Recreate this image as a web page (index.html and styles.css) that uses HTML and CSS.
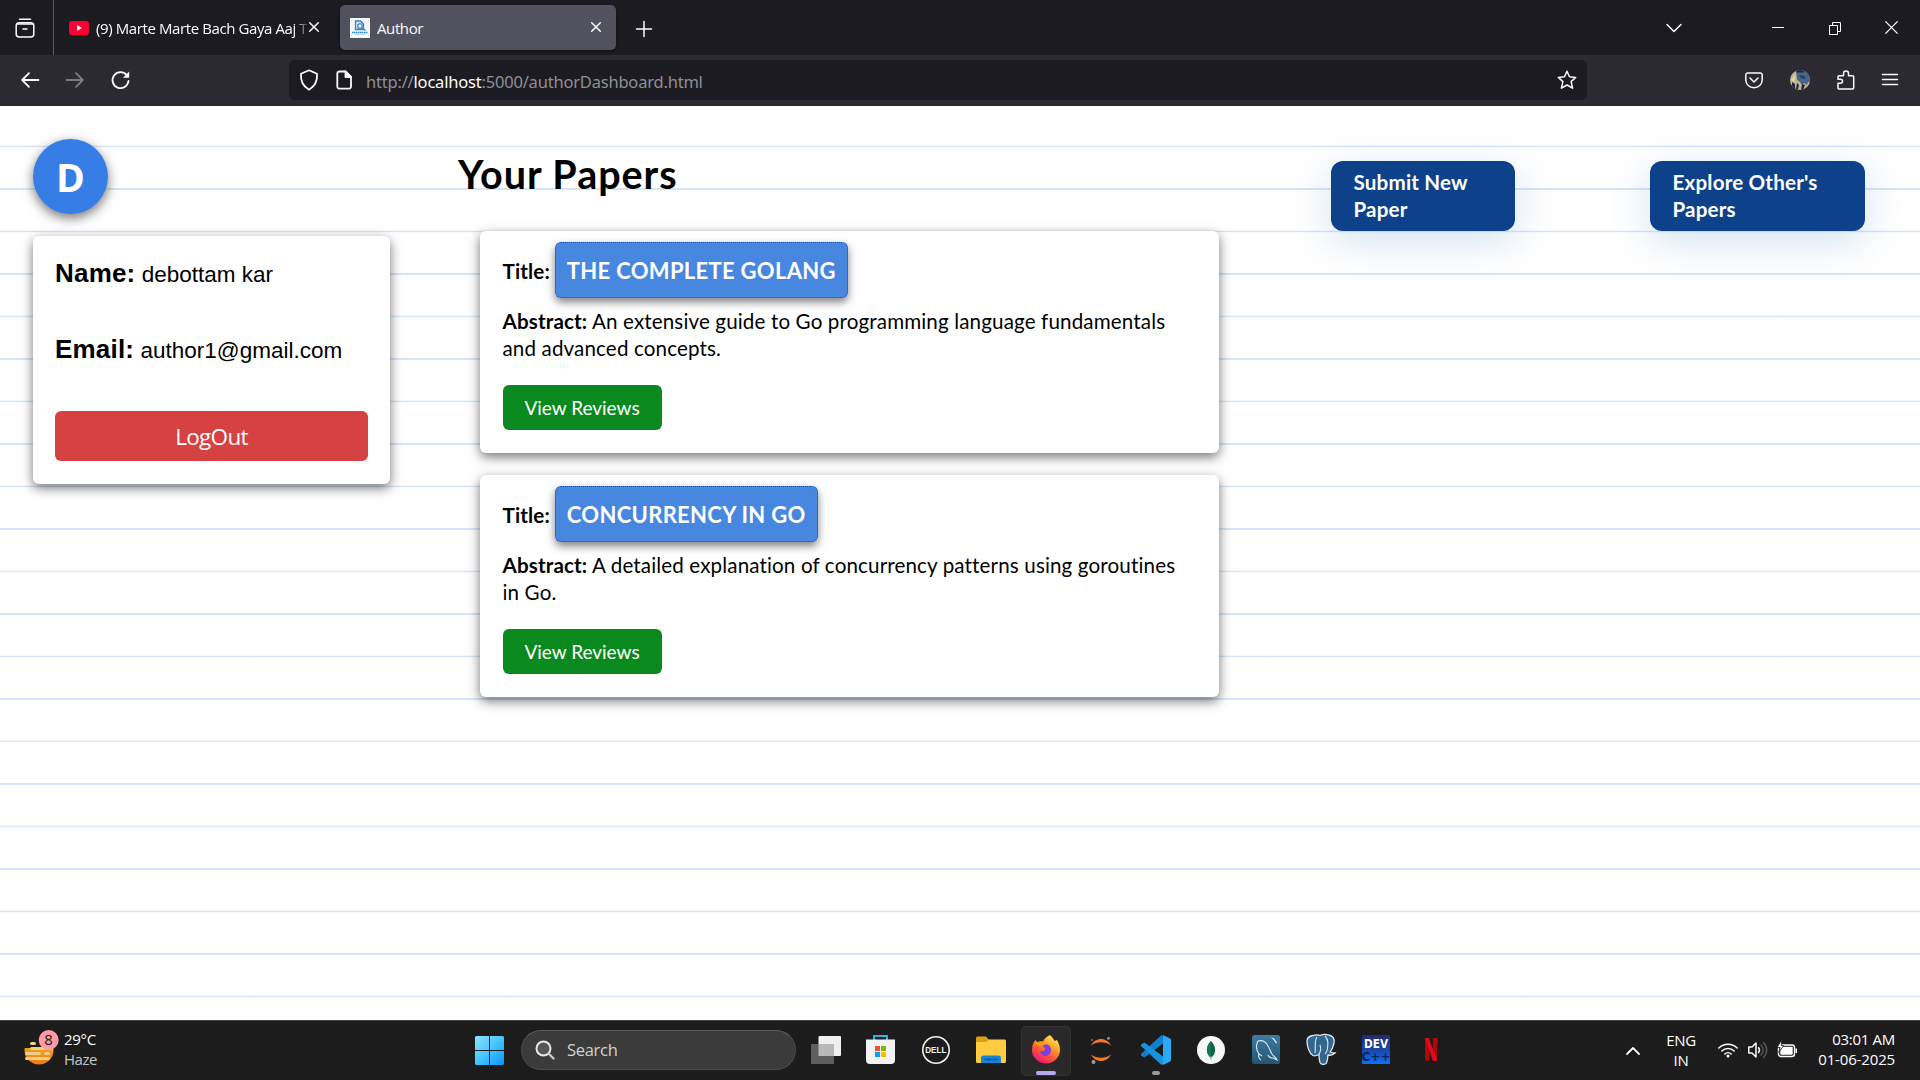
FILE: index.html
```html
<!DOCTYPE html>
<html lang="en">
<head>
<meta charset="utf-8">
<title>Author</title>
<link rel="stylesheet" href="styles.css">
</head>
<body>
<header class="tabstrip">
  <div class="recent"><svg width="20" height="20" viewBox="0 0 20 20" class="line"><path d="M4.5 1.2h11"/><rect x="1.2" y="4.8" width="17.6" height="14.200" rx="3"/><path d="M1.800 6h16.400M8 11h4"/></svg></div>
  <div class="tab">
    <svg width="20" height="14" viewBox="0 0 20 14"><rect width="20" height="14" rx="3" fill="#ff0033"/><path d="M8 4v6l5-3z" fill="#fff"/></svg>
    <span class="tab-label fade">(9) Marte Marte Bach Gaya Aaj T</span>
    <svg class="line x" width="10" height="10" viewBox="0 0 10 10"><path d="M.7.7l8.6 8.6M9.3.7L.7 9.3"/></svg>
  </div>
  <div class="tab active">
    <svg width="20" height="20" viewBox="0 0 20 20"><rect width="20" height="20" fill="#f4f6f7"/><path d="M5.500 11.500V3h5l3 3v5.500z" fill="#d4e8f8" stroke="#2f86c8" stroke-width="1.300"/><circle cx="10" cy="8" r="2.300" fill="#fff" stroke="#2a74b8" stroke-width="1.100"/><path d="M12 10l3.500 2.500" stroke="#2f86c8" stroke-width="1.500"/><path d="M2 14.500h16" stroke="#2f86c8" stroke-width="1.600" stroke-dasharray="1.500 .5"/><path d="M5 16.500h10" stroke="#b5c9dc" stroke-width=".8"/></svg>
    <span class="tab-label">Author</span>
    <svg class="line x" width="10" height="10" viewBox="0 0 10 10"><path d="M.7.7l8.6 8.6M9.3.7L.7 9.3"/></svg>
  </div>
  <svg class="line newtab" width="16" height="16" viewBox="0 0 16 16"><path d="M8 .5v15M.5 8h15"/></svg>
  <div class="winctl">
    <svg class="line" width="16" height="10" viewBox="0 0 16 10"><path d="M1 1.500l7 7 7-7"/></svg>
    <svg class="thin" width="12" height="14" viewBox="0 0 12 14"><path d="M0 6.500h12"/></svg>
    <svg class="thin" width="13" height="14" viewBox="0 0 13 14"><path d="M.5 4.500h8v9h-8zM3.500 4V1.500h8v9H9"/></svg>
    <svg class="thin wide" width="13" height="13" viewBox="0 0 13 13"><path d="M.4.4l12.200 12.200M12.600.4L.4 12.600"/></svg>
  </div>
</header>
<nav class="toolbar">
  <svg class="line heavy" width="18" height="16" viewBox="0 0 18 16"><path d="M17.500 8H1.200M8 1.200L1.200 8 8 14.800"/></svg>
  <svg class="line heavy dim" width="18" height="16" viewBox="0 0 18 16"><path d="M.5 8h16.300M10 1.200L16.800 8 10 14.800"/></svg>
  <svg class="line heavy" width="20" height="20" viewBox="0 0 20 20"><path d="M17.500 11A8 8 0 1 1 16 5.400"/><path d="M18.200 1.500v6.200H12z" fill="#fbfbfe" stroke="none"/></svg>
  <div class="urlbar">
    <svg class="line heavy" width="20" height="22" viewBox="0 0 20 22"><path d="M10 1.300l8 3.500c.5 6.700-2 12.500-8 15.900C4 17.300 1.500 11.500 2 4.800z"/></svg>
    <svg class="line heavy" width="16" height="20" viewBox="0 0 16 20"><path d="M3.500 1.500h6L15 7v9.500a2.200 2.200 0 0 1-2.200 2.200H3.500a2.200 2.200 0 0 1-2.200-2.200v-13a2.200 2.200 0 0 1 2.200-2z"/><path d="M9.500 1.500V7H15z" fill="#fbfbfe"/></svg>
    <span class="url">http://<b>localhost</b>:5000/authorDashboard.html</span>
    <svg class="line star" width="20" height="20" viewBox="0 0 20 20"><path d="M10 1.300l2.500 5.500 6.200.6-4.600 4.200 1.500 6.600-5.600-3.200-5.600 3.200 1.500-6.600L1.300 7.400l6.200-.6z"/></svg>
  </div>
  <div class="actions">
    <svg class="line" width="18" height="17" viewBox="0 0 18 17"><path d="M2.800 1h12.400a2 2 0 0 1 2 2v5a8.200 7.800 0 0 1-16.400 0V3a2 2 0 0 1 2-2z"/><path d="M5 6l4 4 4-4"/></svg>
    <svg width="20" height="20" viewBox="0 0 20 20"><clipPath id="round"><circle cx="10" cy="10" r="10"/></clipPath><g clip-path="url(#round)"><rect width="20" height="20" fill="#c5b48c"/><path d="M6 1h14v12l-2-1-1 3-3-2-2 2-3-4-2-1z" fill="#46658d"/><path d="M5 0h9v2.500H7zM2 12l3 2 0 5H2zM12 14l3 1-2 5h-2zM7 13l2 2-1 4H6z" fill="#172a41"/><path d="M9 5l5 1 2 3-5-1z" fill="#233d5c"/><path d="M1 10l5-6-2 8z" fill="#e3d7b0"/></g></svg>
    <svg class="line" width="18" height="20" viewBox="0 0 18 20"><path d="M1 13.200V18a1 1 0 0 0 1 1h13.500a1.200 1.200 0 0 0 1.200-1.200V7a1.200 1.200 0 0 0-1.200-1.200H11.500V3.500a2.500 2.500 0 0 0-5 0v2.300H2.200A1.200 1.200 0 0 0 1 7v2.200h2.500a2 2 0 0 1 0 4H1"/></svg>
    <svg class="line" width="16" height="14" viewBox="0 0 16 14"><path d="M.5 1.500h15M.5 6.500h15M.5 11.500h15"/></svg>
  </div>
</nav>

<main class="page">
  <aside class="profile">
    <div class="avatar">D</div>
    <div class="card info">
      <p><b>Name:</b> debottam kar</p>
      <p><b>Email:</b> author1@gmail.com</p>
      <button class="logout">LogOut</button>
    </div>
  </aside>
  <section class="papers">
    <h1>Your Papers</h1>
    <article class="card paper">
      <div class="title-row"><b>Title:</b><span class="badge">THE COMPLETE GOLANG</span></div>
      <p><b>Abstract:</b> An extensive guide to Go programming language fundamentals and advanced concepts.</p>
      <button class="reviews">View Reviews</button>
    </article>
    <article class="card paper">
      <div class="title-row"><b>Title:</b><span class="badge">CONCURRENCY IN GO</span></div>
      <p><b>Abstract:</b> A detailed explanation of concurrency patterns using goroutines in Go.</p>
      <button class="reviews">View Reviews</button>
    </article>
  </section>
  <div class="links">
    <a class="submit">Submit New Paper</a>
    <a class="explore">Explore Other's Papers</a>
  </div>
</main>

<footer class="taskbar">
  <div class="weather">
    <svg width="36" height="38" viewBox="0 0 36 38"><defs><linearGradient id="sun" x1="0" y1="0" x2="0" y2="1"><stop offset="0" stop-color="#f9bb1c"/><stop offset="1" stop-color="#ee7a1d"/></linearGradient></defs><circle cx="15" cy="20" r="14.500" fill="url(#sun)"/><path d="M0 0h36v18H0z" fill="#1c1c1c"/><path d="M7.500 13.500h3M7.500 18.500h20M2.500 23.500h13M21.500 23.500h3M2.500 28.500h22" stroke="#efcf80" stroke-width="3" stroke-linecap="round"/><circle cx="24.700" cy="10" r="10" fill="#ff99a4"/><text x="24.500" y="15" text-anchor="middle" class="count">8</text></svg>
    <div><div>29°C</div><div class="haze">Haze</div></div>
  </div>
  <div class="apps">
    <svg class="start" width="29" height="29" viewBox="0 0 29 29"><defs><linearGradient id="win" x1="0" y1="0" x2="1" y2="1"><stop offset="0" stop-color="#8be3ff"/><stop offset=".5" stop-color="#45c5ff"/><stop offset="1" stop-color="#0a94fb"/></linearGradient></defs><path d="M1 0h13v14H0V1zM15 0h13l1 1v13H15zM0 15h14v14H1l-1-1zM15 15h14v13l-1 1H15z" fill="url(#win)"/></svg>
    <div class="search"><svg width="20" height="20" viewBox="0 0 20 20"><circle cx="8.500" cy="8.500" r="7" fill="#555" stroke="#e8e8e8" stroke-width="2"/><path d="M13.500 13.500l5 5" stroke="#c9c9c9" stroke-width="2.400" stroke-linecap="round"/></svg>Search</div>
    <div class="app"><svg width="30" height="28" viewBox="0 0 30 28"><rect x="7.500" width="22.500" height="20" rx="1" fill="#f0f0f0"/><rect y="8" width="23" height="20" rx="1" fill="#5e5e5e"/><path d="M7.500 8H23v12H7.500z" fill="#b9b9b9"/></svg></div>
    <div class="app store"><svg width="29" height="29" viewBox="0 0 29 29"><path d="M8 6V1h13v5" fill="none" stroke="#25b3ee" stroke-width="2"/><path d="M0 4.500h29V25a4 4 0 0 1-4 4H4a4 4 0 0 1-4-4z" fill="#f3f3f3"/><path d="M9 11h5v5H9z" fill="#f25022"/><path d="M15 11h5v5h-5z" fill="#7fba00"/><path d="M9 17h5v5H9z" fill="#00a4ef"/><path d="M15 17h5v5h-5z" fill="#ffb900"/></svg></div>
    <div class="app"><svg width="30" height="30" viewBox="0 0 30 30"><circle cx="15" cy="15" r="13.200" fill="none" stroke="#f2f2f2" stroke-width="1.600"/><text x="14.800" y="18.200" text-anchor="middle" class="dell" textLength="21" lengthAdjust="spacingAndGlyphs">DELL</text></svg></div>
    <div class="app"><svg width="30" height="28" viewBox="0 0 30 28"><path d="M0 2a1.500 1.500 0 0 1 1.500-1.500H10L13 4v5H0z" fill="#dca00c"/><path d="M0 6h10l3-2.500h15.500A1.500 1.500 0 0 1 30 5v20.500A1.500 1.500 0 0 1 28.500 27h-27A1.500 1.500 0 0 1 0 25.500z" fill="#ffcc3f"/><path d="M5 27v-5a2.500 2.500 0 0 1 2.500-2.500h15A2.500 2.500 0 0 1 25 22v5z" fill="#1584d4"/><path d="M8.500 23.500h13" stroke="#0a4c8c" stroke-width="1.300"/></svg></div>
    <div class="app current"><svg width="28" height="29" viewBox="0 0 28 29"><defs><linearGradient id="fox" x1=".85" y1="0" x2=".25" y2="1"><stop offset="0" stop-color="#fff44f"/><stop offset=".4" stop-color="#ff9a2a"/><stop offset=".7" stop-color="#ff4a3f"/><stop offset="1" stop-color="#e3107c"/></linearGradient></defs><path d="M18 0c2 2 3 3 4.500 6l2.500-1c2 4 3 6 3 10a14 13.500 0 0 1-28 0C0 10 1.500 7 3.500 5L5 7.500c2-1.500 4-1.500 6-1 1-3 4-5 7-6.500z" fill="url(#fox)"/><path d="M10 11c4-3 9-1 9 4a5.500 5.500 0 0 1-11 1c2 1 4 0 5-1.500 1-1-1-2-3-3.500z" fill="#7b40dd"/><path d="M3.500 6c0 4 2 5 4 5.500l5-1.500c-1-2-3-3-5-2z" fill="#ff980e"/></svg></div>
    <div class="app"><svg width="22" height="28" viewBox="0 0 22 28"><path d="M1 9.500C5 .8 17 .8 21 9.500 15 5.200 7 5.200 1 9.500zM1 18.500c4 8.700 16 8.700 20 0-6 4.300-14 4.300-20 0z" fill="#f37726"/><circle cx="18.500" cy="2.300" r="1.500" fill="#8a8a8a"/><circle cx="3.500" cy="26" r="2" fill="#9a9a9a"/><circle cx="2" cy="4" r="1" fill="#777"/></svg></div>
    <div class="app open"><svg width="30" height="30" viewBox="0 0 30 30"><path d="M22 8.500L3.500 22.500 0 20.500v-1.500L20.500 0l1.500 1z" fill="#0f7fd0"/><path d="M22 21.500L3.500 7.500 0 9.500V11l20.500 19 1.500-1z" fill="#1593e0"/><path d="M22 0l7 3.500a2 2 0 0 1 1 1.500v20a2 2 0 0 1-1 1.500L22 30z" fill="#2ba9f4"/></svg></div>
    <div class="app"><svg width="28" height="28" viewBox="0 0 28 28"><circle cx="14" cy="14" r="14" fill="#f8f8f8"/><path d="M14 5c5 5 6 12 0 17-6-5-5-12 0-17z" fill="#116149"/><path d="M14 5c-5 5-6 12 0 17z" fill="#13794f"/><path d="M14 20v4" stroke="#9fb9ad"/></svg></div>
    <div class="app"><svg width="28" height="29" viewBox="0 0 28 29"><defs><linearGradient id="sql" x1="0" y1="0" x2="0" y2="1"><stop offset="0" stop-color="#3f7ba2"/><stop offset="1" stop-color="#245672"/></linearGradient></defs><rect width="28" height="29" rx="2.500" fill="url(#sql)"/><path d="M9 25c-2-1-3-4-2-6-3-4-3-9-1-13 4-1 8 1 10 5 2 3 2 5 4 8 1 2 4 3 5 6l-4-2c-2 0-4 0-5-3M7 19l3 2" fill="none" stroke="#d9e9f1" stroke-width="1.100"/><path d="M19 2l3 1.500 3 4-1 1-2-3z" fill="#e8f1f6"/></svg></div>
    <div class="app"><svg width="30" height="31" viewBox="0 0 30 31"><path d="M7 1.500c3-1 5-1 7 0 3-1.500 6-1.500 9-.5 4 1 6 4 5 8-1 4-2 7-4 9 2 1 4 1 5 1-2 2-5 2.500-7 2-.5 4-.5 7-2 8.500-2 1.500-5 1-6-1-1-3-1-6-1-8-2 1-4 2-6 1C3 19 1 12 1 7c0-3 3-5 6-5.500z" fill="#336791" stroke="#dfe8ee" stroke-width="1.300"/><path d="M11 3C8 7 10 12 9 19M19 2c4 4 3 9 2 15M13 20c2-3 2-6 1-9M21 17l-2 3" fill="none" stroke="#dfe8ee" stroke-width="1.100"/></svg></div>
    <div class="app"><svg width="30" height="29" viewBox="0 0 30 29"><defs><linearGradient id="dev" x1="0" y1="0" x2="0" y2="1"><stop offset="0" stop-color="#232a72"/><stop offset=".5" stop-color="#1c46a8"/><stop offset="1" stop-color="#0e6ef6"/></linearGradient></defs><rect x="1" width="28" height="29" fill="url(#dev)"/><text x="15" y="12.500" text-anchor="middle" class="dev" textLength="24" lengthAdjust="spacingAndGlyphs">DEV</text><text x="15" y="26" text-anchor="middle" class="cpp" textLength="29" lengthAdjust="spacingAndGlyphs">C++</text></svg></div>
    <div class="app"><svg width="12" height="23" viewBox="0 0 12 23"><path d="M0 0h4v23l-4-.5zM8 0h4v22.500L8 23z" fill="#b1060f"/><path d="M0 0h4l8 22.500-4 .5z" fill="#e50914"/></svg></div>
  </div>
  <div class="tray">
    <svg class="line heavy chev" width="14" height="8" viewBox="0 0 14 8"><path d="M1 7l6-6 6 6"/></svg>
    <div class="lang"><div>ENG</div><div>IN</div></div>
    <svg class="line wifi" width="20" height="16" viewBox="0 0 20 16"><path d="M.8 6a13 13 0 0 1 18.400 0M3.800 9a8.800 8.800 0 0 1 12.400 0M6.800 12a4.600 4.600 0 0 1 6.400 0"/><circle cx="10" cy="14" r="1.500" fill="#fff" stroke="none"/></svg>
    <svg class="line vol" width="20" height="18" viewBox="0 0 20 18"><path d="M.8 6v6H4l4 4V2L4 6zM10.500 6.500a4 4 0 0 1 0 5"/><path d="M13 4a7 7 0 0 1 0 10M15.500 1.500a10.500 10.500 0 0 1 0 15" stroke="#555"/></svg>
    <svg class="batt" width="21" height="18" viewBox="0 0 21 18"><rect x="1.500" y="4" width="16" height="11.500" rx="2.500" fill="none" stroke="#fff" stroke-width="1.400"/><rect x="3.300" y="5.800" width="12.400" height="8" rx="1" fill="#fff"/><path d="M18.500 7.500H20v4.500h-1.500z" fill="#fff"/><path d="M4.500-1L.2 6.500h3L1.700 11.500 6.700 4.500H4.300z" fill="#fff" stroke="#1c1c1c" stroke-width=".8"/></svg>
    <div class="clock"><div>03:01 AM</div><div class="date">01-06-2025</div></div>
  </div>
</footer>
</body>
</html>
```
FILE: styles.css
```css
* { box-sizing: border-box; }
body {
  margin: 0;
  width: 1920px;
  height: 1080px;
  overflow: hidden;
  display: flex;
  flex-direction: column;
  font-family: Lato, sans-serif;
  background: #fff;
}
svg { display: block; flex: none; overflow: visible; }
p, h1 { margin: 0; }
button { border: 0; padding: 0; font: inherit; color: #fff; }

.line { fill: none; stroke: #fbfbfe; stroke-width: 1.5; stroke-linecap: round; stroke-linejoin: round; }
.heavy { stroke-width: 1.8; }
.thin { fill: none; stroke: #fff; stroke-width: 1; }
.wide { stroke-width: 1.3; }
.dim { opacity: .4; }

/* Browser chrome */
.tabstrip {
  height: 55px;
  flex: none;
  display: flex;
  align-items: center;
  background: #1c1b22;
  color: #fbfbfe;
  font: 15px/20px "Open Sans", sans-serif;
  letter-spacing: -.4px;
}
.recent { width: 54px; height: 55px; padding: 18px 0 0 15px; border-right: 1px solid #5b5b66; }
.tab { display: flex; align-items: center; width: 276px; height: 45px; padding: 0 15px 0 10px; }
.tab:not(.active) { margin-left: 5px; width: 281px; padding-right: 21px; }
.active { background: #52525e; border-radius: 5px; box-shadow: 0 1px 3px #0008; }
.tab-label { flex: 1; margin-left: 7px; white-space: nowrap; overflow: hidden; }
.fade { -webkit-mask: linear-gradient(90deg, #000 198px, transparent 214px); mask: linear-gradient(90deg, #000 198px, transparent 214px); }
.x { margin-top: -1px; }
.newtab { margin: 2px 0 0 20px; }
.winctl { display: flex; align-items: center; margin: 0 22px 0 auto; }
.winctl svg:nth-child(2) { margin-left: 90px; }
.winctl svg:nth-child(3) { margin-left: 45px; }
.winctl svg:nth-child(4) { margin-left: 43px; }

.toolbar {
  height: 51px;
  flex: none;
  display: flex;
  align-items: center;
  gap: 27px;
  padding: 0 22px 1px 21px;
  background: #2b2a33;
}
.urlbar {
  width: 1298px;
  height: 40px;
  margin-left: 131px;
  padding: 0 10px;
  border-radius: 5px;
  display: flex;
  align-items: center;
  background: #1c1b22;
}
.urlbar svg:nth-child(2) { margin: 0 14px 0 17px; }
.url { font: 16.5px/24px "Noto Sans", sans-serif; letter-spacing: -.2px; color: #8f8f96; margin-top: 4px; }
.url b { font-weight: 400; color: #fbfbfe; }
.star { margin-left: auto; }
.actions { margin-left: auto; display: flex; align-items: center; gap: 27px; }

/* Notebook page */
.page {
  flex: 1;
  display: flex;
  align-items: flex-start;
  padding: 33px 55px 0 33px;
  background: repeating-linear-gradient(#fff 0, #fff 39.3px, #d4e3fb 40px, #d9e7fc 41px, #fff 41.6px, #fff 42.5px);
}
.card { background: #fff; border-radius: 6px; box-shadow: 0 4px 12px rgba(0, 0, 0, .55); }
.profile { width: 357px; }
.avatar {
  width: 75px;
  height: 75px;
  border-radius: 50%;
  background: #367ee6;
  color: #fff;
  text-align: center;
  font: 700 39px/75px "Open Sans", sans-serif;
  box-shadow: 0 4px 12px rgba(0, 0, 0, .55);
}
.info {
  display: flex;
  flex-direction: column;
  gap: 46px;
  height: 248px;
  margin-top: 22px;
  padding: 23px 22px;
  font: 22.5px/30px "Liberation Sans", sans-serif;
}
.info b { font-size: 26px; line-height: 30px; letter-spacing: .2px; }
.info p { height: 30px; margin-top: -1px; margin-bottom: 1px; }
.logout {
  height: 50px;
  border-radius: 6px;
  background: #d64141;
  font: 22.5px/52px "Open Sans", sans-serif;
  letter-spacing: -.7px;
}
.papers { width: 761px; margin-left: 68px; padding: 11px 0 0 22px; }
h1 { margin-left: -22px; font-size: 39.5px; line-height: 48px; letter-spacing: .95px; }
.paper {
  height: 222px;
  padding: 11px 0 0 22.5px;
  font-size: 20.6px;
  line-height: 27px;
  letter-spacing: .13px;
}
h1 + .paper { margin-top: 33px; }
.paper + .paper { margin-top: 22px; }
.title-row { display: flex; align-items: baseline; gap: 5px; height: 56px; }
.badge {
  height: 56px;
  padding: 0 11px;
  border: 1px dotted #1d3fe0;
  border-radius: 6px;
  background: #4887df;
  color: #fff;
  font-weight: 700;
  font-size: 22px;
  line-height: 56px;
  letter-spacing: .3px;
  box-shadow: 0 4px 9px rgba(0, 0, 0, .5);
}
.paper p { width: 692px; margin-top: 10px; }
.reviews {
  width: 159px;
  height: 45px;
  margin-top: 23px;
  border-radius: 6px;
  background: #0a8a1e;
  font: 19px/45px Lato, sans-serif;
  display: block;
}
.links {
  display: flex;
  gap: 135px;
  margin: 22px 0 0 auto;
  font-weight: 700;
  font-size: 20.6px;
  line-height: 27px;
  letter-spacing: .18px;
  color: #fff;
}
.links a {
  height: 70px;
  padding: 8px 22.5px;
  border-radius: 12px;
  background: #0d428b;
  box-shadow: 0 10px 40px rgba(13, 90, 180, .18);
}
.submit { width: 184px; }
.explore { width: 215px; }

/* Taskbar */
.taskbar {
  height: 60px;
  flex: none;
  display: flex;
  align-items: center;
  border-top: 1px solid #444;
  background: #1c1c1c;
  color: #fff;
  font: 15px/20px "Open Sans", sans-serif;
  letter-spacing: -.3px;
}
.weather { display: flex; gap: 4px; width: 475px; padding: 0 0 4px 24px; }
.weather svg { margin-top: 1px; }
.haze { color: #c4c4c4; letter-spacing: -.5px; }
.count { font: 15px "Open Sans", sans-serif; fill: #1c1c1c; }
.apps { display: flex; align-items: center; }
.search {
  display: flex;
  align-items: center;
  gap: 12px;
  width: 275px;
  height: 40px;
  margin: -1px 5px 0 17px;
  padding-left: 13px;
  border-radius: 20px;
  border: 1px solid #4a4a4a;
  border-top-color: #5d5d5d;
  background: #3b3b3b;
  color: #d2d2d2;
  font-size: 16.5px;
}
.app { display: flex; flex-direction: column; align-items: center; justify-content: center; width: 50px; height: 50px; margin: 0 5px 0 0; position: relative; }
.app svg { margin-top: -2px; }
.store { padding-right: 1px; }
.current { background: #292929; border-radius: 5px; box-shadow: inset 0 0 0 1px #323232; }
.current::after, .open::after { content: ""; position: absolute; bottom: 1px; width: 20px; height: 4px; border-radius: 2px; background: #b7a9ee; }
.open::after { width: 8px; background: #999; }
.dell { font: 700 8.500px "Liberation Sans", sans-serif; fill: #f2f2f2; letter-spacing: 0; }
.dev { font: 700 12.500px "DejaVu Sans", sans-serif; fill: #fff; letter-spacing: 0; }
.cpp { font: 700 13px "DejaVu Sans", sans-serif; fill: #0a2456; letter-spacing: 0; }
.tray { display: flex; align-items: center; margin-left: auto; padding-right: 25px; }
.lang { width: 30px; margin: 0 22px 2px 26px; text-align: center; }
.wifi, .vol, .batt { margin-top: -1px; }
.vol { margin-left: 10px; margin-right: 9px; }
.clock { width: 97px; margin-bottom: 4px; text-align: right; }
.date { letter-spacing: -.15px; }
```
